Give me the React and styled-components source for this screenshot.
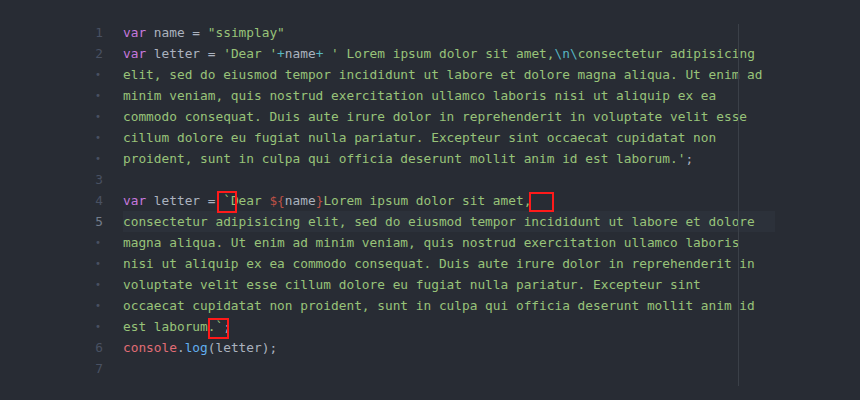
import React from "react";
import styled, { createGlobalStyle } from "styled-components";

const Global = createGlobalStyle`
  html, body { margin: 0; padding: 0; background: #282c34; }
  body { width: 860px; height: 400px; overflow: hidden; }
`;

const Editor = styled.div`
  position: relative;
  width: 860px;
  height: 400px;
  box-sizing: border-box;
  padding-top: 22px;
  background: #282c34;
  font-family: "DejaVu Sans Mono", "Liberation Mono", monospace;
  font-size: 12.8px;
  line-height: 21px;
  color: #abb2bf;
`;

const WrapGuide = styled.div`
  position: absolute;
  left: 738px;
  top: 24px;
  width: 1px;
  height: 362px;
  background: #3b4048;
`;

const Row = styled.div`
  display: grid;
  grid-template-columns: 104px 652px;
  column-gap: 19px;
  height: 21px;
`;

const Gutter = styled.div`
  text-align: right;
  color: ${(p) => (p.$active ? "#737c8c" : "#495162")};
  padding-right: ${(p) => (p.$dot ? "3px" : "1px")};
  font-size: ${(p) => (p.$dot ? "10px" : "12.8px")};
`;

const Code = styled.div`
  white-space: pre;
  background: ${(p) => (p.$active ? "#2c313a" : "transparent")};
`;

const T = styled.span`
  color: ${(p) =>
    ({
      kw: "#c678dd",
      str: "#98c379",
      op: "#56b6c2",
      red: "#e06c75",
      fn: "#61afef",
      interp: "#be5046",
      plain: "#abb2bf",
    })[p.$k || "plain"]};
`;

const Marked = styled.span`
  position: relative;
  &::after {
    content: "";
    position: absolute;
    left: ${(p) => p.$l}px;
    top: ${(p) => p.$t}px;
    width: ${(p) => p.$w}px;
    height: ${(p) => p.$h}px;
    border: 2px solid #ff1a1a;
    box-sizing: border-box;
  }
`;

const lines = [
  { n: "1", c: [["kw", "var"], ["plain", " name = "], ["str", '"ssimplay"']] },
  {
    n: "2",
    c: [
      ["kw", "var"],
      ["plain", " letter = "],
      ["str", "'Dear '"],
      ["op", "+"],
      ["plain", "name"],
      ["op", "+"],
      ["str", " ' Lorem ipsum dolor sit amet,"],
      ["op", "\\n\\"],
      ["str", "consectetur adipisicing"],
    ],
  },
  { dot: true, c: [["str", "elit, sed do eiusmod tempor incididunt ut labore et dolore magna aliqua. Ut enim ad"]] },
  { dot: true, c: [["str", "minim veniam, quis nostrud exercitation ullamco laboris nisi ut aliquip ex ea"]] },
  { dot: true, c: [["str", "commodo consequat. Duis aute irure dolor in reprehenderit in voluptate velit esse"]] },
  { dot: true, c: [["str", "cillum dolore eu fugiat nulla pariatur. Excepteur sint occaecat cupidatat non"]] },
  { dot: true, c: [["str", "proident, sunt in culpa qui officia deserunt mollit anim id est laborum.'"], ["plain", ";"]] },
  { n: "3", c: [] },
  {
    n: "4",
    c: [
      ["kw", "var"],
      ["plain", " letter = "],
      ["mark1", ""],
      ["str", "`Dear "],
      ["interp", "${"],
      ["plain", "name"],
      ["interp", "}"],
      ["str", "Lorem ipsum dolor sit amet,"],
      ["mark2", ""],
    ],
  },
  { n: "5", active: true, c: [["str", "consectetur adipisicing elit, sed do eiusmod tempor incididunt ut labore et dolore"]] },
  { dot: true, c: [["str", "magna aliqua. Ut enim ad minim veniam, quis nostrud exercitation ullamco laboris"]] },
  { dot: true, c: [["str", "nisi ut aliquip ex ea commodo consequat. Duis aute irure dolor in reprehenderit in"]] },
  { dot: true, c: [["str", "voluptate velit esse cillum dolore eu fugiat nulla pariatur. Excepteur sint"]] },
  { dot: true, c: [["str", "occaecat cupidatat non proident, sunt in culpa qui officia deserunt mollit anim id"]] },
  { dot: true, c: [["str", "est laborum"], ["mark3", ""], ["str", ".`"], ["plain", ";"]] },
  {
    n: "6",
    c: [["red", "console"], ["plain", "."], ["fn", "log"], ["plain", "(letter);"]],
  },
  { n: "7", c: [] },
];

const marks = {
  mark1: { l: -6, t: -2, w: 20, h: 22 },
  mark2: { l: -2, t: -1, w: 25, h: 20 },
  mark3: { l: 0, t: -1, w: 21, h: 21 },
};

export default function App() {
  return (
    <>
      <Global />
      <Editor>
        {lines.map((ln, i) => (
          <Row key={i}>
            <Gutter $active={ln.active} $dot={ln.dot}>
              {ln.dot ? "•" : ln.n}
            </Gutter>
            <Code $active={ln.active}>
              {ln.c.map(([k, s], j) =>
                marks[k] ? (
                  <Marked key={j} $l={marks[k].l} $t={marks[k].t} $w={marks[k].w} $h={marks[k].h} />
                ) : (
                  <T key={j} $k={k}>
                    {s}
                  </T>
                )
              )}
            </Code>
          </Row>
        ))}
        <WrapGuide />
      </Editor>
    </>
  );
}
